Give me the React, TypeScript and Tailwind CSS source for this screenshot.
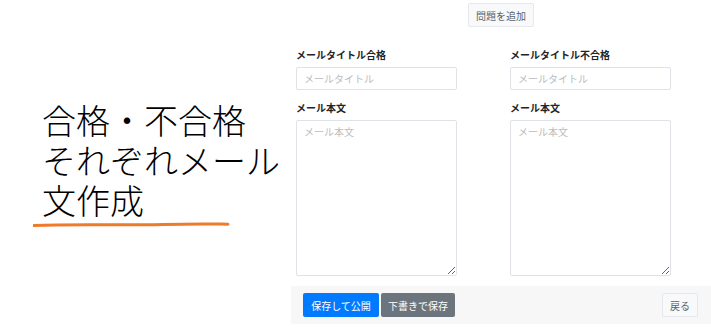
import React from 'react';

const jp = { fontFamily: '"Noto Sans CJK JP", "Noto Sans", sans-serif' };
const caption = { fontFamily: '"Liberation Sans", "Noto Sans CJK JP", sans-serif' };

const Field: React.FC<{ title: string }> = ({ title }) => (
  <div className="flex flex-col w-[161px]">
    <label className="text-[10px] font-bold leading-[15px] text-[#212529] mb-[5px]">{title}</label>
    <input
      placeholder="メールタイトル"
      className="h-[23px] w-full rounded-[2px] border border-[#dfe2e6] px-[7px] text-[10px] outline-none placeholder:text-[#b9bdc1]"
      style={jp}
    />
    <label className="mt-[10px] text-[10px] font-bold leading-[15px] text-[#212529] mb-[5px]">メール本文</label>
    <textarea
      placeholder="メール本文"
      className="h-[156px] w-full rounded-[2px] border border-[#dfe2e6] px-[7px] py-[3px] text-[10px] outline-none placeholder:text-[#b9bdc1]"
      style={jp}
    />
  </div>
);

export default function App() {
  return (
    <div className="flex w-[711px] h-[332px] bg-white overflow-hidden" style={jp}>
      {/* Left caption */}
      <div className="w-[291px] shrink-0 flex flex-col pt-[102px]">
        <div className="pl-[42px] text-[34px] leading-[40px] font-light text-black" style={caption}>
          <div>合格・不合格</div>
          <div className="whitespace-nowrap">それぞれメール</div>
          <div>文作成</div>
        </div>
        <svg width="200" height="8" viewBox="0 0 200 8" className="ml-[33px] mt-[-1px]">
          <path d="M1 4.5 C 40 3, 90 4.5, 130 3.5 S 180 3, 195 3.2" stroke="#ee7a2a" strokeWidth="3" fill="none" strokeLinecap="round" />
        </svg>
      </div>

      {/* Right form */}
      <div className="flex-1 flex flex-col">
        <div className="flex justify-center pt-[3px]">
          <button className="h-[24px] px-[7px] rounded-[2px] border border-[#e6e8eb] bg-[#f8f9fa] text-[10px] text-[#5a6268]">
            問題を追加
          </button>
        </div>

        <div className="flex gap-[53px] pl-[5px] mt-[20px]">
          <Field title="メールタイトル合格" />
          <Field title="メールタイトル不合格" />
        </div>

        <div className="mt-[10px] h-[38px] bg-[#f7f7f7] flex items-center justify-between pl-[12px] pr-[13px]">
          <div className="flex gap-[2px]">
            <button className="h-[24px] w-[76px] rounded-[2px] bg-[#007bff] text-white text-[10px]">保存して公開</button>
            <button className="h-[24px] w-[74px] rounded-[2px] bg-[#6c757d] text-white text-[10px]">下書きで保存</button>
          </div>
          <button className="h-[24px] w-[36px] rounded-[2px] border border-[#e6e8eb] bg-[#f8f9fa] text-[10px] text-[#5a6268]">戻る</button>
        </div>
      </div>
    </div>
  );
}
